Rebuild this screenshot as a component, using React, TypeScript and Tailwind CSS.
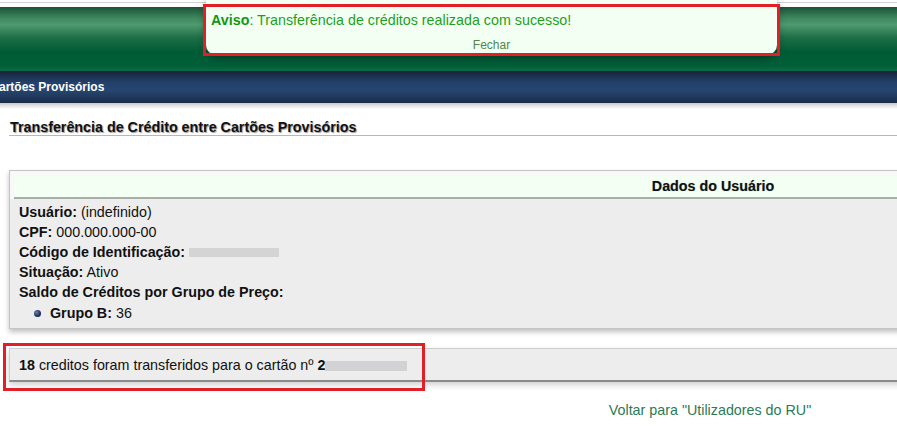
import React from "react";

export default function App() {
  return (
    <div
      className="relative w-[897px] h-[431px] overflow-hidden bg-white text-[14.3px] text-[#111]"
      style={{ fontFamily: '"Liberation Sans", Arial, sans-serif' }}
    >
      {/* top strip */}
      <div className="h-[7px] bg-white pt-[2px]">
        <div className="h-px bg-[#d4d4d4]" />
      </div>
      {/* green header */}
      <div className="h-[64px] bg-[linear-gradient(180deg,#1d5238_0%,#3f8a60_18%,#4f9a6e_28%,#1d6e46_48%,#005c36_70%,#005f38_92%,#0f6a44_100%)]" />
      {/* navy bar */}
      <div className="h-[32px] flex items-center bg-[linear-gradient(180deg,#16233a_0%,#22406a_35%,#26466f_60%,#1e3254_90%,#1a2a44_100%)]">
        <span className="ml-[-1px] text-[12px] font-bold text-white whitespace-nowrap">artões Provisórios</span>
      </div>
      <div className="h-[6px] bg-[linear-gradient(180deg,#c9c9c9,#ffffff)]" />

      {/* title */}
      <div className="ml-[9px] pt-[11px]">
        <div className="pl-px leading-[15px] font-bold text-[14.3px] text-[#111] border-b border-[#99cc99] [text-shadow:1px_1px_1px_#999]">
          Transferência de Crédito entre Cartões Provisórios
        </div>
      </div>

      {/* content */}
      <div className="w-[1420px]">
        {/* box 1 */}
        <div className="ml-[9px] mt-[34px] w-[1404px] border border-[#c4c4c4] bg-[#ededed] shadow-[0_3px_5px_rgba(0,0,0,0.25)]">
          <div className="bg-[#f8f8f8] pt-[5px] pl-[4px]">
            <div className="h-[23px] bg-[#f4fff4] border-b-2 border-[#a9aea9] flex items-center justify-center font-bold text-[14.3px] [text-shadow:0_0_1px_#9aa]">
              Dados do Usuário
            </div>
          </div>
          <div className="px-[9px] pt-[3px] pb-[4px] leading-[20px]">
            <div>
              <b>Usuário:</b> (indefinido)
            </div>
            <div>
              <b>CPF:</b> 000.000.000-00
            </div>
            <div className="flex items-center">
              <b>Código de Identificação:</b>
              <span className="ml-[4px] inline-block w-[90px] h-[9px] bg-[#d4d4d4]" />
            </div>
            <div>
              <b>Situação:</b> Ativo
            </div>
            <div className="leading-[21px]">
              <b>Saldo de Créditos por Grupo de Preço:</b>
            </div>
            <div className="flex items-center pl-[15px] leading-[21px]">
              <span className="inline-block w-[7px] h-[7px] rounded-full bg-[radial-gradient(circle_at_35%_35%,#6a7fae,#1d2f5c_60%,#101b38)]" />
              <span className="ml-[9px]">
                <b>Grupo B:</b> 36
              </span>
            </div>
          </div>
        </div>

        {/* box 2 */}
        <div className="ml-[9px] mt-[19px] w-[1404px] h-[34px] bg-[#ededed] border-t border-l border-[#cdcdcd] border-b-2 border-b-[#8a8a8a] shadow-[0_3px_6px_rgba(0,0,0,0.18)] flex items-center pl-[9px] pt-[2px]">
          <span>
            <b>18</b> creditos foram transferidos para o cartão nº <b>2</b>
          </span>
          <span className="inline-block w-[82px] h-[10px] bg-[#d2d2d4]" />
        </div>

        {/* link */}
        <div className="mt-[20px] text-center text-[14.3px] text-[#2c7a55] leading-[16px]">
          Voltar para "Utilizadores do RU"
        </div>
      </div>

      {/* notification popup */}
      <div className="absolute left-[206px] top-0 w-[571px] h-[55px] bg-[#f4fff4] rounded-b-[10px] shadow-[0_2px_8px_rgba(0,0,0,0.45)]">
        <div className="pl-[5px] pt-[11px] text-[14.3px] leading-[18px] text-[#1c9f1c] whitespace-nowrap">
          <b className="text-[#139613]">Aviso</b>: Transferência de créditos realizada com sucesso!
        </div>
        <div className="mt-[9px] text-center text-[12px] leading-[14px] text-[#4b884b]">Fechar</div>
      </div>

      {/* red annotations */}
      <div className="absolute left-[203px] top-[4px] w-[577px] h-[52px] border-[3px] border-[#e21f26]" />
      <div className="absolute left-[3px] top-[343px] w-[422px] h-[48px] border-[3px] border-[#e21f26]" />
    </div>
  );
}
